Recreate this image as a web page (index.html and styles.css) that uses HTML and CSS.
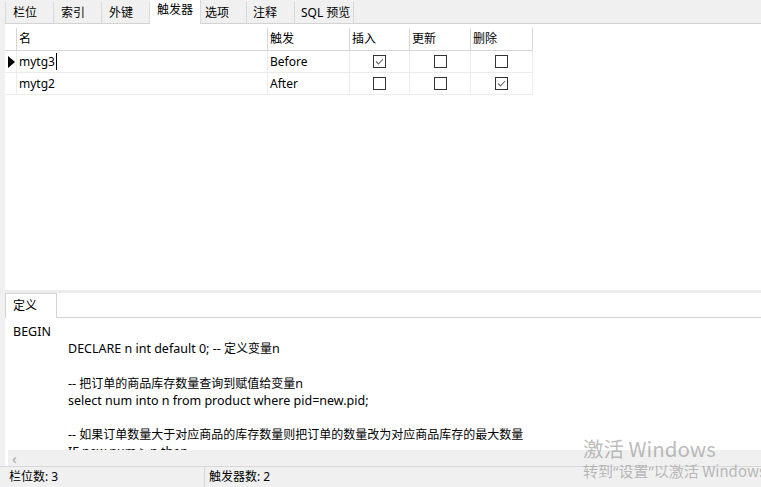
FILE: index.html
```html
<!DOCTYPE html>
<html lang="zh">
<head>
<meta charset="utf-8">
<link rel="stylesheet" href="styles.css">
</head>
<body>
<div class="app">
  <div class="main">
    <div class="tabs">
      <div class="tab first">栏位</div>
      <div class="tab">索引</div>
      <div class="tab">外键</div>
      <div class="tab active">触发器</div>
      <div class="tab t-opt">选项</div>
      <div class="tab t-note">注释</div>
      <div class="tab t-sql">SQL 预览</div>
      <div class="tab-fill"></div>
    </div>
    <div class="grid-area">
      <div class="row head">
        <div class="cell ind"></div>
        <div class="cell">名</div>
        <div class="cell">触发</div>
        <div class="cell">插入</div>
        <div class="cell">更新</div>
        <div class="cell">删除</div>
      </div>
      <div class="row">
        <div class="cell ind"><svg class="arrow-ind" width="7" height="12" viewBox="0 0 7 12"><polygon points="0,0 7,6 0,12" fill="#000"/></svg></div>
        <div class="cell">mytg3<span class="caret"></span></div>
        <div class="cell">Before</div>
        <div class="cell center"><svg class="cb" width="13" height="13" viewBox="0 0 13 13"><rect x="0.5" y="0.5" width="12" height="12" fill="#fff" stroke="#333"/><polyline points="3,6.5 5.5,9 10,4" fill="none" stroke="#666" stroke-width="1.1"/></svg></div>
        <div class="cell center"><svg class="cb" width="13" height="13" viewBox="0 0 13 13"><rect x="0.5" y="0.5" width="12" height="12" fill="#fff" stroke="#333"/></svg></div>
        <div class="cell center"><svg class="cb" width="13" height="13" viewBox="0 0 13 13"><rect x="0.5" y="0.5" width="12" height="12" fill="#fff" stroke="#333"/></svg></div>
      </div>
      <div class="row">
        <div class="cell ind"></div>
        <div class="cell">mytg2</div>
        <div class="cell">After</div>
        <div class="cell center"><svg class="cb" width="13" height="13" viewBox="0 0 13 13"><rect x="0.5" y="0.5" width="12" height="12" fill="#fff" stroke="#333"/></svg></div>
        <div class="cell center"><svg class="cb" width="13" height="13" viewBox="0 0 13 13"><rect x="0.5" y="0.5" width="12" height="12" fill="#fff" stroke="#333"/></svg></div>
        <div class="cell center"><svg class="cb" width="13" height="13" viewBox="0 0 13 13"><rect x="0.5" y="0.5" width="12" height="12" fill="#fff" stroke="#333"/><polyline points="3,6.5 5.5,9 10,4" fill="none" stroke="#666" stroke-width="1.1"/></svg></div>
      </div>
    </div>
    <div class="splitter"></div>
    <div class="bottom">
      <div class="btabs">
        <div class="btab">定义</div>
        <div class="btab-fill"></div>
      </div>
      <div class="editor">
        <div class="line">BEGIN</div>
        <div class="line indent">DECLARE n int default 0; -- <span class="cjk">定义变量</span>n</div>
        <div class="line"></div>
        <div class="line indent">-- <span class="cjk">把订单的商品库存数量查询到赋值给变量</span>n</div>
        <div class="line indent">select num into n from product where pid=new.pid;</div>
        <div class="line"></div>
        <div class="line indent">-- <span class="cjk">如果订单数量大于对应商品的库存数量则把订单的数量改为对应商品库存的最大数量</span></div>
        <div class="line indent">IF new.num &gt; n then</div>
      </div>
      <div class="hscroll"><span class="hs-arrow">&lsaquo;</span></div>
    </div>
  </div>
  <div class="status">
    <div class="st st-first">栏位数: 3</div>
    <div class="st">触发器数: 2</div>
  </div>
  <div class="watermark">
    <div class="wm1">激活 Windows</div>
    <div class="wm2">转到<span class="q">“</span>设置<span class="q">”</span>以激活 Windows。</div>
  </div>
</div>
</body>
</html>
```
FILE: styles.css
```css
html, body {
  margin: 0;
  padding: 0;
}
body {
  font-family: "Noto Sans", "Noto Sans CJK SC", sans-serif;
  font-size: 12px;
  color: #000;
  background: #f0f0f0;
}
.app {
  position: relative;
  width: 761px;
  height: 487px;
  overflow: hidden;
  display: flex;
  flex-direction: column;
  background: #f0f0f0;
}
.main {
  flex: 1;
  display: flex;
  flex-direction: column;
  padding-left: 5px;
  min-height: 0;
}
/* top tabs */
.tabs {
  display: flex;
  height: 24px;
  flex: none;
}
.tab {
  box-sizing: border-box;
  margin-top: 2px;
  height: 22px;
  width: 48px;
  padding-left: 7px;
  line-height: 21px;
  border-right: 1px solid #d9d9d9;
  border-bottom: 1px solid #d3d3d3;
  white-space: nowrap;
}
.tab.first {
  width: 49px;
  border-left: 1px solid #d9d9d9;
}
.tab.active {
  margin-top: 0;
  height: 24px;
  width: 51px;
  background: #fff;
  border-bottom: none;
  line-height: 20px;
}
.tab.t-opt { width: 46px; padding-left: 4px; }
.tab.t-note { width: 48px; padding-left: 6px; }
.tab.t-sql { width: 59px; padding-left: 6px; }
.tab-fill {
  flex: 1;
  border-bottom: 1px solid #d3d3d3;
}
/* grid */
.grid-area {
  flex: 1;
  background: #fff;
  padding-top: 4px;
}
.row {
  display: grid;
  grid-template-columns: 12px 251px 82px 60px 61px 62px;
  height: 22px;
}
.row.head {
  height: 23px;
}
.cell {
  box-sizing: border-box;
  border-right: 1px solid #ececec;
  border-bottom: 1px solid #ececec;
  padding-left: 2px;
  line-height: 21px;
  white-space: nowrap;
  display: flex;
  align-items: center;
}
.row.head .cell {
  border-color: #d6d6d6;
  line-height: 22px;
}
.cell.ind {
  padding-left: 3px;
}
.cell.center {
  justify-content: center;
  padding-left: 0;
}
.caret {
  display: inline-block;
  width: 1px;
  height: 17px;
  background: #000;
  margin-left: 1px;
}
.arrow-ind, .cb {
  display: block;
}
.splitter {
  height: 3px;
  flex: none;
  background: #ececec;
}
/* bottom panel */
.bottom {
  display: flex;
  flex-direction: column;
  flex: none;
  background: #fff;
}
.btabs {
  display: flex;
  height: 25px;
  background: #fff;
}
.btab {
  box-sizing: border-box;
  width: 52px;
  height: 25px;
  padding-left: 7px;
  line-height: 24px;
  border-left: 1px solid #d4d4d4;
  border-right: 1px solid #d4d4d4;
  border-top: 1px solid #d4d4d4;
  background: #fff;
}
.btab-fill {
  flex: 1;
  border-bottom: 1px solid #d4d4d4;
}
.editor {
  height: 132px;
  overflow: hidden;
  padding: 5px 0 0 8px;
  box-sizing: border-box;
  background: #fff;
  font-size: 12.5px;
}
.line {
  height: 17.2px;
  line-height: 17px;
  white-space: nowrap;
}
.line .cjk {
  font-size: 12px;
}
.line.indent {
  padding-left: 55px;
}
.hscroll {
  height: 16px;
  margin-left: 3px;
  background: #f0f0f0;
  display: flex;
  align-items: center;
}
.hs-arrow {
  color: #a6a6a6;
  font-size: 15px;
  line-height: 16px;
  padding-left: 4px;
}
/* status */
.status {
  flex: none;
  height: 21px;
  box-sizing: border-box;
  border-top: 1px solid #d8d8d8;
  background: #f0f0f0;
  display: flex;
}
.st {
  line-height: 20px;
  padding-left: 4px;
  white-space: nowrap;
}
.st-first {
  box-sizing: border-box;
  width: 205px;
  padding-left: 9px;
  border-right: 1px solid #d8d8d8;
}
/* overlay watermark */
.watermark {
  position: absolute;
  left: 583px;
  top: 436px;
  color: rgba(150, 150, 150, 0.65);
  font-family: "Noto Sans CJK SC", "Noto Sans", sans-serif;
  white-space: nowrap;
  pointer-events: none;
}
.wm1 {
  font-size: 20.5px;
  line-height: 24px;
}
.wm2 {
  font-size: 15px;
  line-height: 22px;
}
.wm2 .q {
  font-family: "Noto Sans", sans-serif;
}
```
